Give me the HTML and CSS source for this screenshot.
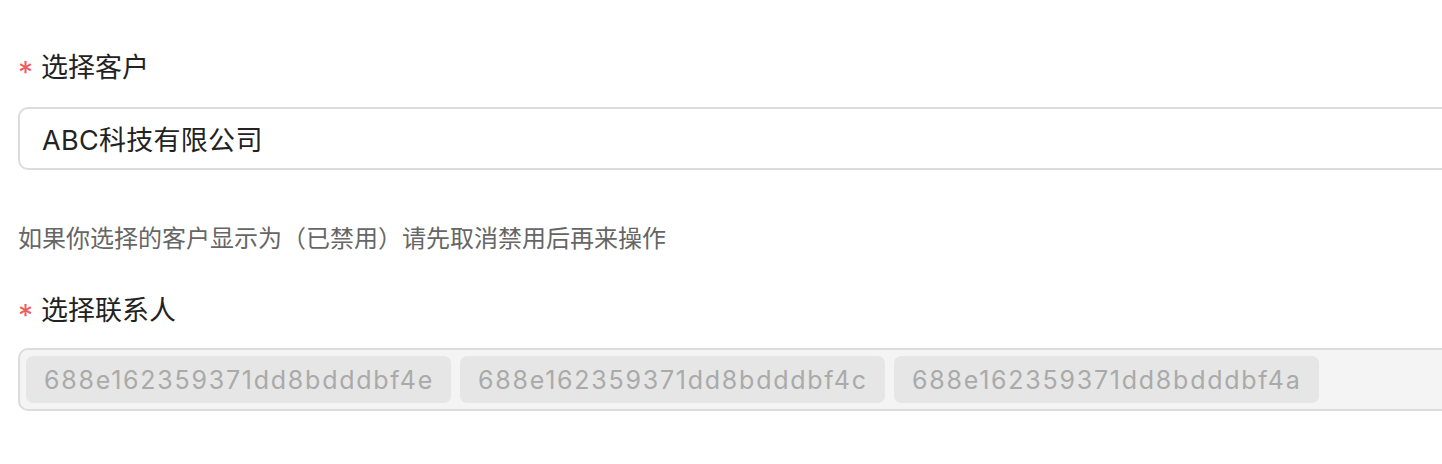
FILE: index.html
```html
<!DOCTYPE html>
<html lang="zh-CN">
<head>
<meta charset="utf-8">
<title>选择客户</title>
<link rel="stylesheet" href="styles.css">
</head>
<body>
<form class="form">
  <div class="field field-customer">
    <label class="field-label"><span class="required">*</span>选择客户</label>
    <div class="input">ABC科技有限公司</div>
    <p class="help">如果你选择的客户显示为（已禁用）请先取消禁用后再来操作</p>
  </div>
  <div class="field field-contact">
    <label class="field-label"><span class="required">*</span>选择联系人</label>
    <div class="input input-disabled">
      <span class="tag">688e162359371dd8bdddbf4e</span>
      <span class="tag">688e162359371dd8bdddbf4c</span>
      <span class="tag">688e162359371dd8bdddbf4a</span>
    </div>
  </div>
</form>
</body>
</html>
```
FILE: styles.css
```css
html, body {
  margin: 0;
  padding: 0;
  overflow: hidden;
  background: #fff;
}
body {
  font-family: Inter, "Noto Sans CJK SC", sans-serif;
  color: #222;
}
.form {
  padding: 50px 0 0 18px;
  display: flex;
  flex-direction: column;
}
.field {
  display: flex;
  flex-direction: column;
}
.field-label {
  font-size: 27px;
  line-height: 36px;
  height: 36px;
  color: #222;
  display: flex;
  align-items: center;
}
.required {
  color: #ee5c5c;
  font-family: Inter, sans-serif;
  font-size: 30px;
  line-height: 28px;
  width: 23px;
  padding-top: 8px;
}
.field-customer .field-label {
  margin-bottom: 21px;
}
.field-contact {
  margin-top: 37px;
}
.field-contact .field-label {
  margin-bottom: 19px;
}
.input {
  box-sizing: border-box;
  width: 1470px;
  height: 63px;
  border: 2px solid #dcdcdc;
  border-radius: 10px;
  display: flex;
  align-items: center;
  padding: 0 22px;
  font-size: 27px;
  letter-spacing: 0.3px;
  color: #222;
}
.help {
  margin: 52px 0 0;
  font-size: 24px;
  line-height: 34px;
  color: #666;
}
.input-disabled {
  background: #f4f4f4;
  padding: 0 6px;
  gap: 9px;
  letter-spacing: 0;
}
.tag {
  box-sizing: border-box;
  height: 47px;
  width: 425px;
  display: flex;
  align-items: center;
  padding: 0 18px;
  background: #e6e6e6;
  border-radius: 7px;
  color: #aaa;
  font-size: 25px;
  letter-spacing: 1.75px;
  white-space: nowrap;
}
```
